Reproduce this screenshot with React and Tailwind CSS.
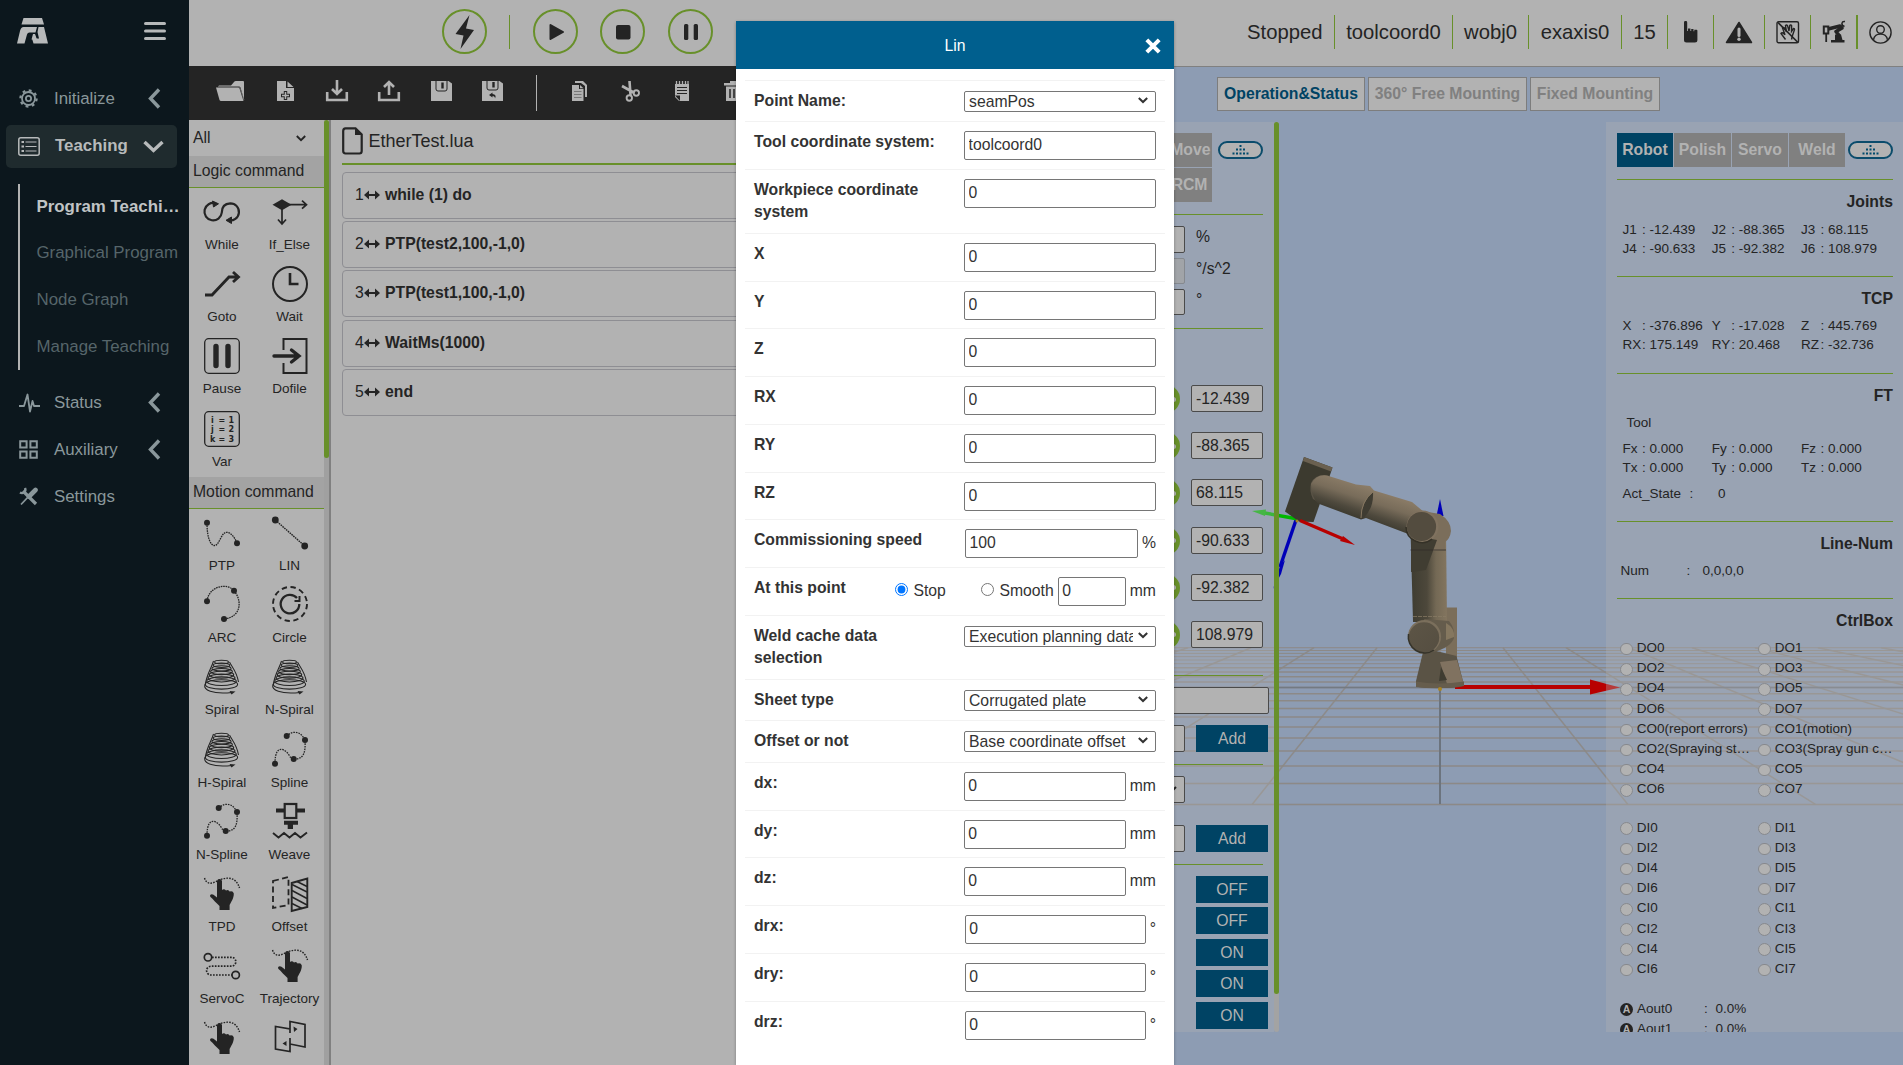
import React from "react";

const DARK = "#242424";

/* ---------- command palette icons (36 x 36) ---------- */

function Glyph({ children }) {
  return (
    <svg width="36" height="36" viewBox="0 0 36 36" fill="none" stroke={DARK} strokeWidth="1.6" className="overflow-visible">
      {children}
    </svg>
  );
}

const Dot = ({ x, y, r = 3 }) => <circle cx={x} cy={y} r={r} fill={DARK} stroke="none" />;

const SpiralIcon = () => (
  <Glyph>
    <g strokeWidth="1.05">
      {[0, 1, 2, 3, 4, 5, 6, 7].map((i) => (
        <ellipse key={i} cx={17.5} cy={3 + i * 3.2} rx={7 + i * 1.3} ry={1.8 + i * 0.42} />
      ))}
      <path d="M1 25.500 C-1 31 8 35.500 28 33.500" />
      <path d="M1 26.500 C3 14 8 8 9.500 2 M34.500 23 C33 13 28 8 25.500 3" />
    </g>
    <path d="M25.500 32 L31.500 32.500 L27.500 35.500 Z" fill={DARK} stroke="none" />
  </Glyph>
);

const HandIcon = () => (
  <Glyph>
    <path d="M0.500 2 C3 10 10 7 14 4.500 C22 1 32 0 35.500 12" strokeDasharray="1.600 1.200" strokeWidth="1.400" />
    <path
      fill={DARK}
      stroke="none"
      d="M13 5 a2.600 2.600 0 0 1 5 0 V14 q2-2 4 .6 q2.400-1.500 3.600 1 q3.400-1 4.200 1.800 C30 22 27 26 25.600 29 V34 H15.500 V30 C12 27 9 23 6.500 21 C5 19 7.500 17.300 9.500 18.800 L13 21.500 Z"
    />
  </Glyph>
);

const SplineIcon = () => (
  <Glyph>
    <path d="M3 31.700 C3 10 14 18 17 23 S21 27 24 27 C33 26 33.500 18 33 8 C28-2 20-1 14.700 4" strokeDasharray="1.600 1" strokeWidth="1.300" />
    <Dot x={14.7} y={4} />
    <Dot x={33} y={8} />
    <Dot x={21.7} y={27} />
    <Dot x={3} y={31.7} />
  </Glyph>
);

const ICONS = {
  While: (
    <Glyph>
      <g strokeWidth="2.200">
        <path d="M11.500 9.300 A8.700 8.700 0 1 0 17.800 18.500 C17.800 13 20.500 9.600 26.300 9.300 A8.600 8.600 0 1 1 24.500 26.300" />
      </g>
      <path d="M8.500 7 L14.500 9.800 L9.500 13 Z M27.500 23 V29.500 L22 26.300 Z" fill={DARK} stroke={DARK} strokeWidth="1" />
    </Glyph>
  ),
  If_Else: (
    <Glyph>
      <path d="M0.500 10.700 L10 5.200 L19.500 10.700 L10 16.200 Z" fill={DARK} stroke="none" />
      <path d="M10 12 V30 M6 25.500 L10 30 L14 25.500 M16 10.700 H34.500 M30 6.700 L34.500 10.700 L30 14.700" strokeWidth="1.700" />
    </Glyph>
  ),
  Goto: (
    <Glyph>
      <path d="M1 29 H8 L25 11 H34.500 M29 6 L34.500 11 L29 16" strokeWidth="2.800" />
    </Glyph>
  ),
  Wait: (
    <Glyph>
      <circle cx="18" cy="18" r="17" strokeWidth="2" />
      <path d="M18 7 V18 H26.500" strokeWidth="2.600" />
    </Glyph>
  ),
  Pause: (
    <Glyph>
      <rect x="0.700" y="0.700" width="34.600" height="34.600" rx="4" strokeWidth="1.300" />
      <path d="M12 8.500 V27.500 M24 8.500 V27.500" strokeWidth="5.400" strokeLinecap="round" />
    </Glyph>
  ),
  Dofile: (
    <Glyph>
      <path d="M11.500 12 V1 H34.500 V35 H11.500 V25" strokeWidth="2" />
      <path d="M2 18 H27 M19.500 12 L27 18 L19.500 24" strokeWidth="3.400" strokeLinecap="round" />
    </Glyph>
  ),
  Var: (
    <Glyph>
      <rect x="0.700" y="0.700" width="34.600" height="34.600" rx="4" strokeWidth="1.300" />
      <g fill={DARK} stroke="none" fontFamily="DejaVu Sans, sans-serif" fontWeight="bold" fontSize="8">
        <text x="7" y="11.500">i</text>
        <text x="14.500" y="11.500">=</text>
        <text x="24.500" y="11.500">1</text>
        <text x="7" y="21">j</text>
        <text x="14.500" y="21">=</text>
        <text x="24.500" y="21">2</text>
        <text x="6" y="31">k</text>
        <text x="14.500" y="31">=</text>
        <text x="24.500" y="31">3</text>
      </g>
    </Glyph>
  ),
  PTP: (
    <Glyph>
      <path d="M3 8 C3 24 7 30.500 10.500 30.500 C15.500 30.500 17 17.300 22.700 17.300 C27 17.300 31 23 33 28" strokeDasharray="1.600 0.800" strokeWidth="1.300" />
      <Dot x={3} y={7.7} />
      <Dot x={33} y={28.3} />
    </Glyph>
  ),
  LIN: (
    <Glyph>
      <path d="M3.300 5 L32.700 31" strokeDasharray="1.600 0.800" strokeWidth="1.400" />
      <Dot x={3.3} y={5} r={3.4} />
      <Dot x={32.7} y={31} r={3.4} />
    </Glyph>
  ),
  ARC: (
    <Glyph>
      <path d="M3 14.300 C5-2 24-4 30 3.700 C38 13 38 30 20 32" strokeDasharray="1.600 0.800" strokeWidth="1.300" />
      <Dot x={3} y={14.3} />
      <Dot x={30} y={3.7} />
      <Dot x={20} y={32} />
    </Glyph>
  ),
  Circle: (
    <Glyph>
      <circle cx="18" cy="17" r="17" strokeDasharray="5.300 3.600" strokeWidth="1.900" />
      <path d="M25 11 A9.300 9.300 0 1 0 27.300 17" strokeWidth="2.300" />
      <path d="M27.500 9 V14 H22.500" strokeWidth="2" />
    </Glyph>
  ),
  Spiral: <SpiralIcon />,
  "N-Spiral": <SpiralIcon />,
  "H-Spiral": <SpiralIcon />,
  Spline: <SplineIcon />,
  "N-Spline": <SplineIcon />,
  Weave: (
    <Glyph>
      <rect x="12.700" y="0" width="11.600" height="14" strokeWidth="2.200" />
      <path d="M4 6.500 H12 M25 6.500 H33" strokeWidth="4.200" />
      <path d="M12 16.700 H26 V20.700 H21 V25 H15.700 V20.700 H12 Z" fill={DARK} stroke="none" />
      <path d="M1 29 L6.500 33.500 L12 29 L17.500 33.500 L23 29 L28.500 33.500 L35 28.500" strokeWidth="1.900" />
    </Glyph>
  ),
  TPD: <HandIcon />,
  Offset: (
    <Glyph>
      <path d="M1 5 L16.500 1 V29 L1 32 Z" strokeDasharray="6 3.400" strokeWidth="1.800" />
      <path d="M19.700 7 L35.300 2.500 V31 L19.700 35 Z" strokeWidth="1.900" />
      <path d="M20 8.500 L35 16 M20 14.500 L35 22.500 M20 21 L35 29 M20 27.500 L30 32.500 M25 5.500 L35 10.500" strokeWidth="1.500" />
    </Glyph>
  ),
  ServoC: (
    <Glyph>
      <circle cx="4" cy="9.300" r="3.700" strokeWidth="1.700" />
      <circle cx="31.700" cy="27" r="3.700" strokeWidth="1.700" />
      <path d="M8 9.300 H28 a4.500 4.500 0 0 1 0 8.900 H7 a4.400 4.400 0 0 0 0 8.800 H28" strokeDasharray="1.700 1.300" strokeWidth="1.700" />
    </Glyph>
  ),
  Trajectory: <HandIcon />,
  Last1: <HandIcon />,
  Last2: (
    <Glyph>
      <path d="M18 18 V31.500 L3.500 29 V6.500 L18 9 V13 M18 12 V1.500 L33 4.500 V27 L18 24" strokeWidth="1.700" />
      <path d="M21.500 6.500 L25.500 9 L22 12 Z M14.500 21 V26 L10.500 23.500 Z" fill={DARK} stroke="none" />
    </Glyph>
  ),
};

function CommandGrid({ names, className }) {
  return (
    <div className={"grid grid-cols-[66px_69px] " + className}>
      {names.map((n) => (
        <div key={n} className="flex h-[72.2px] flex-col items-center">
          {ICONS[n]}
          <span className="mt-[4px] whitespace-nowrap text-[13.5px] leading-[22px]">{n.startsWith("Last") ? "" : n}</span>
        </div>
      ))}
    </div>
  );
}

function GroupTitle({ children }) {
  return <div className="h-[32px] shrink-0 border-b border-[#68902a] bg-[#a3a3a3] pl-[4px] text-[15.75px] leading-[30px]">{children}</div>;
}

/* ---------- sidebar ---------- */

const ChevL = () => (
  <svg width="13" height="21" viewBox="0 0 13 21" fill="none" stroke="currentColor" strokeWidth="3.400">
    <path d="M11 1.500 L2.500 10.500 L11 19.500" />
  </svg>
);

function NavItem({ icon, label, chevron, h }) {
  return (
    <div className={"flex items-center pl-[19px] text-[#8a979b] " + h}>
      <div className="flex w-[35px] items-center">{icon}</div>
      <span className="w-[93.500px] text-[16.875px]">{label}</span>
      {chevron && <ChevL />}
    </div>
  );
}

function Sidebar() {
  return (
    <aside className="flex w-[189px] shrink-0 flex-col bg-[#0c171d]">
      <div className="flex h-[66px] items-center justify-between pb-[4px] pl-[17px] pr-[23px] text-[#b7b9ba]">
        <svg width="31" height="26" viewBox="0 0 31 26" fill="currentColor">
          <path d="M6.500 0 H25 L27 6.500 H4.500 Z" />
          <path d="M6.500 9 H20 L18.500 14.500 H12.500 Q10.500 14.500 10 16.500 L7.500 25.500 H0 L3 13 Q4 9 6.500 9 Z" />
          <path d="M21.500 9 H27 L31 25.500 H16.500 L15 20.500 H22 L20.500 14 Z" />
          <path d="M16 16 L14.500 21.500 H20 L18 16 Z" />
        </svg>
        <svg width="22" height="18" viewBox="0 0 22 18" stroke="currentColor" strokeWidth="3" strokeLinecap="round">
          <path d="M1.500 1.500 H20.500 M1.500 9 H20.500 M1.500 16.500 H20.500" />
        </svg>
      </div>
      <NavItem
        h="h-[59px] pt-[6px]"
        label="Initialize"
        chevron
        icon={
          <svg width="19" height="19" viewBox="0 0 19 19" fill="none" stroke="currentColor">
            <circle cx="9.500" cy="9.500" r="6.500" strokeWidth="1.800" />
            <circle cx="9.500" cy="9.500" r="8.100" strokeWidth="2.200" strokeDasharray="2.800 3.560" />
            <circle cx="9.500" cy="9.500" r="2.600" strokeWidth="1.800" />
          </svg>
        }
      />
      <div className="ml-[6px] flex h-[43px] w-[171px] items-center rounded-[5px] bg-[#1f2b2e] pb-[2px] pl-[12px] text-[#b7babb]">
        <svg width="22" height="19" viewBox="0 0 22 19" fill="none" stroke="currentColor" className="mr-[15px] mt-[2px]">
          <rect x="0.800" y="0.800" width="20.400" height="17.400" rx="2" strokeWidth="1.500" />
          <path d="M3.500 5 H6 M3.500 9.500 H6 M3.500 14 H6" strokeWidth="2.200" />
          <path d="M7.500 5 H18.500 M7.500 9.500 H18.500 M7.500 14 H18.500" strokeWidth="1.100" />
        </svg>
        <span className="w-[88px] text-[16.875px] font-bold">Teaching</span>
        <svg width="21" height="13" viewBox="0 0 21 13" fill="none" stroke="currentColor" strokeWidth="3.400" className="mt-[2px]">
          <path d="M1.500 2 L10.500 10.500 L19.500 2" />
        </svg>
      </div>
      <div className="ml-[18px] mt-[16px] flex h-[186px] flex-col border-l-2 border-[#b2b2b2] pl-[16.500px] text-[16.875px] leading-[45px] text-[#56656a]">
        <div className="h-[46.300px] w-[145px] truncate font-bold leading-[45px] text-[#c0c4c5]">Program Teaching</div>
        <div className="h-[46.800px] whitespace-nowrap">Graphical Program</div>
        <div className="h-[46.800px]">Node Graph</div>
        <div className="h-[45px] whitespace-nowrap">Manage Teaching</div>
      </div>
      <div className="mt-[9px] flex flex-col">
        <NavItem
          h="h-[47px]"
          label="Status"
          chevron
          icon={
            <svg width="21" height="20" viewBox="0 0 21 20" fill="none" stroke="currentColor" strokeWidth="1.800" strokeLinejoin="round">
              <path d="M0 13 H5 L8.500 1.500 L11 18.500 L13.500 8 L15 13 H21" />
            </svg>
          }
        />
        <NavItem
          h="h-[47px]"
          label="Auxiliary"
          chevron
          icon={
            <svg width="19" height="19" viewBox="0 0 19 19" fill="none" stroke="currentColor" strokeWidth="2">
              <path d="M1.200 1.200 H7.600 V7.600 H1.200 Z M11.400 1.200 H17.800 V7.600 H11.400 Z M1.200 11.400 H7.600 V17.800 H1.200 Z M11.400 11.400 H17.800 V17.800 H11.400 Z" />
            </svg>
          }
        />
        <NavItem
          h="h-[47px]"
          label="Settings"
          icon={
            <svg width="19" height="19" viewBox="0 0 19 19" fill="none" stroke="currentColor">
              <path d="M4 4 L17 17" strokeWidth="3.200" />
              <path d="M1 5.500 a3.500 3.500 0 0 0 5 -4.500" strokeWidth="2.400" />
              <path d="M2 17.500 L10 9" strokeWidth="1.800" />
              <path d="M10 9.500 L16.500 3" strokeWidth="4.600" strokeLinecap="round" />
            </svg>
          }
        />
      </div>
    </aside>
  );
}

/* ---------- header and toolbar ---------- */

function RoundButton({ children, className }) {
  return (
    <div className={"flex size-[45px] shrink-0 items-center justify-center rounded-full border-2 border-[#68902a] " + className}>
      <svg width="36" height="36" viewBox="-18 -18 36 36" fill={DARK}>
        {children}
      </svg>
    </div>
  );
}

const statusCells = [
  ["Stopped", "w-[88px] pr-[13px] text-right"],
  ["toolcoord0", "w-[118px] text-center"],
  ["wobj0", "w-[76px] text-center"],
  ["exaxis0", "w-[93px] text-center"],
  ["15", "w-[46px] text-center"],
];

function Header() {
  return (
    <header className="flex h-[66px] shrink-0 items-start bg-[#b2b2b2] pt-[9px]">
      <RoundButton className="ml-[253px]">
        <path d="M4.500 -17 L-9.500 2 L-1.500 3.500 L-4.500 17 L9 -2 L1 -3.500 Z" />
      </RoundButton>
      <div className="ml-[22px] mt-[6px] h-[34px] w-px bg-[#68902a]" />
      <RoundButton className="ml-[23px]">
        <path d="M-5.500 -7 L7 0 L-5.500 7 Z" stroke={DARK} strokeWidth="2" strokeLinejoin="round" />
      </RoundButton>
      <RoundButton className="ml-[22px]">
        <rect x="-7" y="-7" width="14.500" height="14.500" rx="2" />
      </RoundButton>
      <RoundButton className="ml-[23px]">
        <rect x="-7" y="-8" width="4.300" height="16" rx="1.500" />
        <rect x="2.700" y="-8" width="4.300" height="16" rx="1.500" />
      </RoundButton>
      <div className="ml-auto mt-[6px] flex h-[34px] text-[20.250px] leading-[34px]">
        {statusCells.map(([t, w]) => (
          <div key={t} className={"border-r border-[#68902a] " + w}>{t}</div>
        ))}
        <div className="flex w-[46px] items-center justify-center border-r border-[#68902a]">
          <svg width="16" height="22" viewBox="0 0 16 22" fill={DARK}>
            <path d="M1 1.500 a1.600 1.600 0 0 1 3.200 0 V10 h.8 V7.500 h2.400 V10 h.8 V8 h2.300 V10.200 h.8 V8.800 h2.300 q.8 0 .8 1 V19 q0 2.500-2.500 2.500 H3.500 Q1 21.500 1 19 Z" />
          </svg>
        </div>
        <div className="flex w-[51px] items-center justify-center border-r border-[#68902a]">
          <svg width="28" height="23" viewBox="0 0 28 23">
            <path d="M14 1.500 L26.500 21.500 H1.500 Z" fill={DARK} stroke={DARK} strokeWidth="1.500" strokeLinejoin="round" />
            <path d="M14 8 V14.500" stroke="#b2b2b2" strokeWidth="3" strokeLinecap="round" />
            <circle cx="14" cy="18.300" r="1.700" fill="#b2b2b2" />
          </svg>
        </div>
        <div className="flex w-[46px] items-center justify-center border-r border-[#68902a]">
          <svg width="24" height="23" viewBox="0 0 24 23" fill="none" stroke={DARK} strokeWidth="1.400">
            <rect x="1" y="0.800" width="21.500" height="21" rx="1.500" />
            <path d="M9.500 18.500 L5 12.500 q1-1.500 2.500 0 L9 13.800 L6.500 7 q1-1 2 0 L10.500 11 L9.500 4.500 q1-1 2 0 L13 10 L13.800 4.300 q1-.8 1.800 .4 L15.500 10.500 L17.500 7.500 q1.200 0 1 1.200 L16.500 14.500 L15.500 18.500" />
            <path d="M2 1.500 L22 21.500" strokeWidth="1.700" />
          </svg>
        </div>
        <div className="flex w-[47px] items-center justify-center border-r-2 border-[#68902a]">
          <svg width="24" height="24" viewBox="0 0 24 24" fill="none" stroke={DARK}>
            <path d="M6 9 L18 6 L20 8 L14 11.500 L17.500 16" strokeWidth="3.600" strokeLinejoin="round" />
            <path d="M9 22.500 H22.500 V20 H20.500 L19 14.500 H13 V20 H9 Z" fill={DARK} stroke="none" />
            <rect x="1.800" y="6.500" width="4.500" height="7" strokeWidth="2" />
            <path d="M4.200 13 V22" strokeWidth="1.800" />
            <path d="M23 1.500 C19.500 1 18.500 5 22.500 6.500" strokeWidth="1.500" />
          </svg>
        </div>
        <div className="flex w-[45px] items-center justify-center">
          <svg width="23" height="23" viewBox="0 0 23 23" fill="none" stroke={DARK} strokeWidth="1.400">
            <circle cx="11.500" cy="11.500" r="10.600" />
            <circle cx="11.500" cy="8.500" r="3.800" />
            <path d="M4.500 18.800 C5.500 11 17.500 11 18.500 18.800" />
          </svg>
        </div>
      </div>
    </header>
  );
}

const LIGHT = "#b2b2b2";

function Tool({ className, w, children }) {
  return (
    <svg width={w} height="22" viewBox={"0 0 " + w + " 22"} fill={LIGHT} className={"shrink-0 overflow-visible " + className}>
      {children}
    </svg>
  );
}

function Toolbar() {
  return (
    <div className="flex h-[54px] shrink-0 items-center overflow-hidden bg-[#242424] pb-[4px]">
      <Tool w={29} className="ml-[27px]">
        <path d="M3 5.500 H15 L18 2 Q18.500 1 20 1 H27 Q28 1 28 2 V20 L24.500 7.500 Q24 6.500 23 6.500 H2 Z" />
        <path d="M0 7.500 H22 Q23 7.500 23.500 8.500 L27.500 21 H5 Q4 21 3.500 20 Z" />
        <path d="M2 7 H22.500 Q23.700 7 24.200 8.500 L28 20" fill="none" stroke="#777" strokeWidth="0.700" />
      </Tool>
      <Tool w={17} className="ml-[32px]">
        <path d="M0 1 H9 V8 H17 V21 H0 Z M10.500 1.500 L16.500 7 H10.500 Z" />
        <path d="M8.500 11 V20 M4 15.500 H13" stroke={DARK} strokeWidth="3.400" />
        <path d="M8.500 12 V19 M5 15.500 H12" stroke={LIGHT} strokeWidth="1.500" />
      </Tool>
      <Tool w={22} className="ml-[32px]">
        <path d="M1.200 12 V20 H20.800 V12 M11 0 V13 M6 9 L11 14 L16 9" fill="none" stroke={LIGHT} strokeWidth="2.600" />
      </Tool>
      <Tool w={22} className="ml-[30px]">
        <path d="M1.200 12 V20 H20.800 V12 M11 15 V2 M6 7 L11 2 L16 7" fill="none" stroke={LIGHT} strokeWidth="2.600" />
      </Tool>
      <Tool w={21} className="ml-[31px]">
        <path d="M0 1 H17.500 L21 3.500 V21 H0 Z" />
        <path d="M5 1 V9 Q5 11 7 11 H14 Q16 11 16 9 V1" fill="none" stroke={DARK} strokeWidth="1" />
        <path d="M11.500 2.500 V8.500" stroke={DARK} strokeWidth="2.400" />
      </Tool>
      <Tool w={21} className="ml-[30px]">
        <path d="M0 1 H17.500 L21 3.500 V21 H0 Z" />
        <path d="M5 1 V8 Q5 10 7 10 H14 Q16 10 16 8 V1" fill="none" stroke={DARK} strokeWidth="1" />
        <path d="M11.500 2 V7.500" stroke={DARK} strokeWidth="2.400" />
        <path d="M7 15 L10.500 12.500 V14 Q15 14.500 13 18.500 Q13 16 10.500 16 V17.500 Z" fill={DARK} />
      </Tool>
      <div className="ml-[33px] mt-[4px] h-[36px] w-px bg-[#b2b2b2]" />
      <Tool w={15} className="ml-[35px]">
        <path d="M3 1 H11 L15 5 V17 H13 V6 L9 3 H3 Z" />
        <path d="M0 5 H7 V9 H11.500 V21 H0 Z" />
        <path d="M8 5 L11.500 8.200 H8 Z" />
        <path d="M2 11.500 H9.500 M2 14.500 H9.500 M2 17.500 H9.500" stroke="#777" strokeWidth="1" />
      </Tool>
      <Tool w={19} className="ml-[34px]">
        <g fill="none" stroke={LIGHT}>
          <path d="M1 6 L13.500 13 M8.500 1 L9.500 15" strokeWidth="2.600" />
          <circle cx="15.300" cy="13" r="2.700" strokeWidth="1.900" />
          <circle cx="8.300" cy="18" r="2.700" strokeWidth="1.900" />
        </g>
      </Tool>
      <Tool w={16} className="ml-[34px]">
        <path d="M1 4 H15 V21 H5 L1 17 Z" />
        <path d="M2.500 1 V4 M5.500 1 V4 M8.500 1 V4 M11.500 1 V4 M14 1 V4" stroke={LIGHT} strokeWidth="1.300" />
        <path d="M3 7.500 H13 M3 10.500 H13 M3 13.500 H13" stroke={DARK} strokeWidth="1.200" />
        <path d="M1 15.500 H6 V21 Z" fill={DARK} />
      </Tool>
      <Tool w={20} className="ml-[34px]">
        <path d="M0 3 H20 V5.500 H0 Z M6 3 V1 H14 V3" />
        <path d="M2 6.500 H18 V21 H2 Z" />
        <path d="M6 9 V18 M10 9 V18 M14 9 V18" stroke={DARK} strokeWidth="1.500" />
      </Tool>
    </div>
  );
}

const codeLines = [
  ["while (1) do", "mb-[2px]"],
  ["PTP(test2,100,-1,0)", "mb-[2px]"],
  ["PTP(test1,100,-1,0)", "mb-[3px]"],
  ["WaitMs(1000)", "mb-[2px]"],
  ["end", ""],
];

function Program() {
  return (
    <div className="flex min-w-0 flex-1 flex-col bg-[#b2b2b2] pl-[11px]">
      <div className="flex h-[45px] items-center border-b-2 border-[#68902a] text-[18px]">
        <svg width="21" height="28" viewBox="0 0 21 28" className="mb-[1px] mr-[5.500px]">
          <path d="M3.500 1.300 H13.500 L19.700 7.500 V24 Q19.700 26.500 17.500 26.500 H3.500 Q1.200 26.500 1.200 24 V4 Q1.200 1.300 3.500 1.300 Z" fill="none" stroke={DARK} strokeWidth="2.200" />
          <path d="M13 1.500 V8 H19.500 Z" fill={DARK} />
        </svg>
        <span className="mb-[1px]">EtherTest.lua</span>
      </div>
      <div className="mt-[7px] flex flex-col">
        {codeLines.map(([t, m], i) => (
          <div key={t} className={"flex h-[47px] items-center rounded-[4px] border border-[#8e8e93] pb-[1px] pl-[12px] text-[15.750px] " + m}>
            <span className="w-[9px]">{i + 1}</span>
            <svg width="16" height="10" viewBox="0 0 16 10" fill={DARK} className="mb-[1px] mr-[5px]">
              <path d="M0 5 L5 0.500 V4 H11 V0.500 L16 5 L11 9.500 V6 H5 V9.500 Z" />
            </svg>
            <span className="font-bold">{t}</span>
          </div>
        ))}
      </div>
    </div>
  );
}

/* ---------- 3D scene ---------- */

const HORIZON = 566.7;
const rows = Array.from({ length: 21 }, (_, i) => HORIZON + 1 / ((0.0014025 + i * 0.00013563) * 3));
const cols = Array.from({ length: 21 }, (_, i) => i - 10);

/* Drawn in window coordinates, starting at x=1100, y=67. */
function Scene() {
  return (
    <svg className="absolute left-0 top-0" width="803" height="998" viewBox="1100 67 803 998">
      <defs>
        <linearGradient id="col" x1="0" x2="1">
          <stop offset="0" stopColor="#3e3c31" />
          <stop offset="0.45" stopColor="#4d483b" />
          <stop offset="0.7" stopColor="#746955" />
          <stop offset="1" stopColor="#83755f" />
        </linearGradient>
        <linearGradient id="arm" gradientUnits="userSpaceOnUse" x1="1368" y1="486" x2="1357" y2="519">
          <stop offset="0" stopColor="#8c7d68" />
          <stop offset="0.4" stopColor="#786c5a" />
          <stop offset="0.75" stopColor="#4e493d" />
          <stop offset="1" stopColor="#3b392f" />
        </linearGradient>
        <linearGradient id="ring" x1="0" y1="0" x2="1" y2="1">
          <stop offset="0" stopColor="#5d5546" />
          <stop offset="1" stopColor="#554e41" />
        </linearGradient>
      </defs>
      <g stroke="#8c8885" fill="none">
        {rows.map((y, i) => (
          <path key={i} d={`M1100 ${y.toFixed(1)} H1903`} strokeWidth={i > 14 ? 1 : 1.5} opacity={0.95} />
        ))}
        {cols.map((c) => (
          <path key={c} d={`M${1440 + c * 63} 647.7 L${1440 + c * 187.7} 804.300`} strokeWidth="1.500" opacity={0.9} />
        ))}
      </g>
      <path d="M1100 687.500 H1903" stroke="#737a82" strokeWidth="1.400" />
      <path d="M1440 690 V804" stroke="#6c747e" strokeWidth="2" />
      {/* world axes */}
      <path d="M1455 687 H1592" stroke="#b80000" strokeWidth="4" />
      <path d="M1590 679.500 L1590 694.500 L1620 687.500 Z" fill="#b80000" />
      <path d="M1440 499 L1436.500 516 H1443.500 Z" fill="#0000b8" />
      {/* tool axes */}
      <path d="M1296 520 L1280 567" stroke="#0000b8" strokeWidth="3.400" />
      <path d="M1285 560 L1280 566 L1273 589 L1281 574 Z" fill="#0000b8" />
      <path d="M1262 512.500 L1298 519" stroke="#00b800" strokeWidth="3.400" />
      <path d="M1252 511 L1266 509.500 L1265 516 Z" fill="#10b810" />
      {/* base */}
      <path d="M1446 607.500 H1457 V662 H1446 Z" fill="#7b6e5a" />
      <path d="M1424 648 L1456.500 656 L1464 685 Q1463 688 1440 688 Q1418 688 1416 686 V681 Z" fill="#5a5345" />
      <path d="M1440 662 L1457 660 L1464 685 L1448 687 Z" fill="#807260" />
      <path d="M1441 667 L1447 680 L1439 681 Z" fill="#3f3c31" />
      <path d="M1416 681.500 Q1438 685.500 1464 681.500 V686 Q1440 690 1416 687 Z" fill="#665d4d" />
      {/* upper column */}
      <path d="M1410.500 530 L1446 530 L1447 622 L1413 622 Z" fill="url(#col)" />
      <path d="M1413 616.500 L1446 616.500" stroke="#8a7c66" strokeWidth="0.700" strokeDasharray="4 1" />
      {/* shoulder */}
      <path d="M1424 619 L1449 621 Q1455 628 1454 638 Q1451 647 1434 652 Z" fill="#655c4c" />
      <path d="M1446 623 Q1455 628 1454 637 L1446 640 Z" fill="#85775f" />
      <circle cx="1424.500" cy="636.500" r="16.600" fill="#7b6f5c" />
      <circle cx="1424" cy="637.500" r="15.200" fill="url(#ring)" />
      <path d="M1408.500 634 A16.300 16.300 0 0 0 1434 650" fill="none" stroke="#35332a" strokeWidth="1.500" />
      {/* wrist and tool flange */}
      <path d="M1304 457 L1332.500 467.500 L1330 475 L1313.500 522 L1299 521.500 L1285 511.500 Z" fill="#3c3a2f" />
      <path d="M1304 457 L1332.500 467.500 L1331 471.500 L1303 461 Z" fill="#6a6050" />
      <path d="M1311 483 Q1315 475 1324 475 L1330 476 L1322 504 L1313 499 Q1309 491 1311 483 Z" fill="#5a5346" />
      {/* forearm */}
      <path d="M1311 484 Q1316 474 1327 475.500 L1356 484.500 L1370 486 L1374 490.500 L1412 502 L1424 512 L1416 536 L1407 533.500 L1366 518 L1361 519.500 L1318 503.500 Q1311 497 1311 484 Z" fill="url(#arm)" />
      <path d="M1373 492 Q1374 508 1363 518.500 L1361 519 Q1362 501 1373 492 Z" fill="#3f3c32" />
      <path d="M1361 518 Q1361 501 1373 492" fill="none" stroke="#857660" strokeWidth="1" />
      {/* elbow */}
      <path d="M1422 511 L1440 514 Q1451 521 1451 531 Q1450 539 1445 542 L1445 551 H1411 V540 Z" fill="#7b6e5b" />
      <path d="M1411 535 L1437 540 L1426 570 L1411 572 Z" fill="#403d32" />
      <path d="M1410.500 550 H1446" stroke="#332f28" strokeWidth="0.800" />
      <circle cx="1422.500" cy="526.500" r="16" fill="#80725f" />
      <circle cx="1421.500" cy="526.500" r="14.600" fill="#534c3f" />
      <path d="M1406 527 A16 16 0 0 0 1432 539" fill="none" stroke="#343127" strokeWidth="1.600" />
      <path d="M1300 520.500 L1342 538.500" stroke="#b80000" strokeWidth="3.400" />
      <path d="M1343 536 L1340 541 L1355 545 Z" fill="#b80000" />
      <circle cx="1440" cy="689" r="2" fill="#a88322" />
      <circle cx="1297" cy="521" r="1.500" fill="#a88322" />
    </svg>
  );
}

function Pill({ className }) {
  return (
    <div className={"flex h-[18px] w-[45px] items-center justify-center rounded-full border-2 border-[#0b4c6b] bg-[#b2b2b2] " + className}>
      <svg width="17" height="10" viewBox="0 0 17 10" fill="#004a6c">
        <path d="M7.500 0h2v2h-2z M4 3.500h2v2h-2z M7.500 3.500h2v2h-2z M11 3.500h2v2h-2z M0.500 7.500h2v2h-2z M4 7.500h2v2h-2z M7.500 7.500h2v2h-2z M11 7.500h2v2h-2z M14.500 7.500h2v2h-2z" />
      </svg>
    </div>
  );
}

const Rule = ({ className }) => <div className={"h-px shrink-0 bg-[#68902a] " + className} />;

const Box = ({ className, children }) => (
  <div className={"shrink-0 rounded-[2px] border border-[#4a4a4a] bg-[#b2b2b2] text-[15.750px] leading-[25px] " + className}>{children}</div>
);

const Btn = ({ children, className }) => (
  <div className={"ml-[96px] h-[27px] w-[72px] shrink-0 bg-[#004364] text-center text-[15.750px] leading-[28px] text-[#b2b2b2] " + className}>{children}</div>
);

function OpsPanel() {
  return (
    <div className="flex h-[910px] w-[179px]">
      <div className="flex w-[174px] flex-col overflow-hidden bg-[#b2b2b2]/[0.33]">
        <div className="mt-[11px] flex">
          <div className="h-[34px] w-[112px] bg-[#808080] pr-[1.500px] text-right text-[15.750px] font-bold leading-[34px] text-[#b2b2b2]">Move</div>
          <Pill className="ml-[6px] mt-[8px]" />
        </div>
        <div className="mt-px h-[34px] w-[112px] shrink-0 bg-[#808080] pr-[4.500px] text-right text-[15.750px] font-bold leading-[34px] text-[#b2b2b2]">RCM</div>
        <Rule className="mr-[11px] mt-[12px]" />
        <div className="mt-[11px] flex h-[27px] text-[15.750px] leading-[22px]">
          <Box className="h-[27px] w-[85px]" />
          <span className="ml-[11px]">%</span>
        </div>
        <div className="mt-[5px] flex h-[26px] text-[15.750px] leading-[22px]">
          <Box className="h-[26px] w-[85px] border-[#85898f]! bg-[#a1a4a8]!" />
          <span className="ml-[11px]">°/s^2</span>
        </div>
        <div className="mt-[5px] flex h-[26px] text-[15.750px] leading-[22px]">
          <Box className="h-[26px] w-[85px]" />
          <span className="ml-[11px]">°</span>
        </div>
        <Rule className="mr-[11px] mt-[13px]" />
        <div className="mt-[56px] flex flex-col">
          {["-12.439", "-88.365", "68.115", "-90.633", "-92.382", "108.979"].map((v) => (
            <div key={v} className="flex h-[47.200px] items-start">
              <div className="ml-[52px] flex size-[28px] items-center justify-center rounded-full bg-[#68902a]">
                <div className="h-[5px] w-[19px] rounded-full bg-[#b2b2b2]" />
              </div>
              <Box className="ml-[11px] h-[27px] w-[72px] pl-[4px]">{v}</Box>
            </div>
          ))}
        </div>
        <Rule className="mr-[11px] mt-[7px]" />
        <Box className="mt-[11px] h-[27px] w-[169px]" />
        <div className="mt-[11px] flex">
          <Box className="h-[27px] w-[85px]" />
          <Btn className="ml-[11px]!">Add</Btn>
        </div>
        <Rule className="mr-[11px] mt-[12px]" />
        <Box className="mt-[11px] flex h-[27px] w-[85px] items-center justify-end pr-[7px]">
          <svg width="10" height="7" viewBox="0 0 10 7" fill="none" stroke={DARK} strokeWidth="2">
            <path d="M1 1 L5 5 L9 1" />
          </svg>
        </Box>
        <div className="mt-[22px] flex">
          <Box className="h-[27px] w-[85px]" />
          <Btn className="ml-[11px]!">Add</Btn>
        </div>
        <Rule className="mr-[11px] mt-[12px]" />
        <Btn className="mt-[11px]">OFF</Btn>
        <Btn className="mt-[4px]">OFF</Btn>
        <Btn className="mt-[5px]">ON</Btn>
        <Btn className="mt-[4px]">ON</Btn>
        <Btn className="mt-[5px]">ON</Btn>
      </div>
      <div className="flex w-[5px] flex-col rounded-full bg-[#a3a3a3]">
        <div className="h-[872px] rounded-full bg-[#68902a]" />
      </div>
    </div>
  );
}

function Pair({ k, v }) {
  return (
    <div className="flex w-[89.300px]">
      <span className="w-[19.500px]">{k}</span>
      <span className="w-[7.500px]">:</span>
      <span>{v}</span>
    </div>
  );
}

function Readout({ data, className }) {
  return (
    <div className={"grid shrink-0 grid-cols-[89.3px_89.3px_89.3px] pl-[5.5px] leading-[19px] " + className}>
      {data.map(([k, v]) => (
        <Pair key={k} k={k} v={v} />
      ))}
    </div>
  );
}

const Title = ({ children }) => (
  <div className="mt-[11px] h-[22px] shrink-0 text-right text-[15.750px] font-bold leading-[22px]">{children}</div>
);

function Lamps({ names, className }) {
  return (
    <div className={"grid shrink-0 grid-cols-[138px_138px] pl-[3px] " + className}>
      {names.map((n) => (
        <div key={n} className="flex h-[20.200px] items-center">
          <span className="mt-[2px] size-[12.500px] shrink-0 rounded-full border border-[#87898d] bg-[#b2b2b2]" />
          <span className="ml-[4.250px] w-[118px] shrink-0 truncate leading-[20px]">{n}</span>
        </div>
      ))}
    </div>
  );
}

const outs = ["DO0", "DO1", "DO2", "DO3", "DO4", "DO5", "DO6", "DO7", "CO0(report errors)", "CO1(motion)", "CO2(Spraying start/stop)", "CO3(Spray gun cleaning)", "CO4", "CO5", "CO6", "CO7"];
const ins = ["DI0", "DI1", "DI2", "DI3", "DI4", "DI5", "DI6", "DI7", "CI0", "CI1", "CI2", "CI3", "CI4", "CI5", "CI6", "CI7"];

function StatusPanel() {
  return (
    <div className="flex h-[910px] w-[297px] flex-col overflow-hidden bg-[#b2b2b2]/[0.33] pl-[11px] pr-[10px] pt-[11px] text-[13.500px]">
      <div className="flex shrink-0 gap-px text-center text-[15.750px] font-bold leading-[34px] text-[#b2b2b2]">
        <div className="h-[34px] w-[56px] bg-[#004364]">Robot</div>
        <div className="h-[34px] w-[57px] bg-[#808080]">Polish</div>
        <div className="h-[34px] w-[56px] bg-[#808080]">Servo</div>
        <div className="h-[34px] w-[56px] bg-[#808080]">Weld</div>
        <Pill className="ml-[2px] mt-[8px]" />
      </div>
      <Rule className="mt-[12px]" />
      <Title>Joints</Title>
      <Readout
        className="mt-[7px]"
        data={[["J1", "-12.439"], ["J2", "-88.365"], ["J3", "68.115"], ["J4", "-90.633"], ["J5", "-92.382"], ["J6", "108.979"]]}
      />
      <Rule className="mt-[18px]" />
      <Title>TCP</Title>
      <Readout
        className="mt-[6px]"
        data={[["X", "-376.896"], ["Y", "-17.028"], ["Z", "445.769"], ["RX", "175.149"], ["RY", "20.468"], ["RZ", "-32.736"]]}
      />
      <Rule className="mt-[19px]" />
      <Title>FT</Title>
      <div className="mt-[6px] shrink-0 pl-[9.500px] leading-[19px]">Tool</div>
      <Readout
        className="mt-[7px]"
        data={[["Fx", "0.000"], ["Fy", "0.000"], ["Fz", "0.000"], ["Tx", "0.000"], ["Ty", "0.000"], ["Tz", "0.000"]]}
      />
      <div className="mt-[7px] flex shrink-0 pl-[5.500px] leading-[19px]">
        <span className="w-[67px]">Act_State</span>
        <span className="w-[28.500px]">:</span>
        <span>0</span>
      </div>
      <Rule className="mt-[18px]" />
      <Title>Line-Num</Title>
      <div className="mt-[6px] flex shrink-0 pl-[3.500px] leading-[19px]">
        <span className="w-[66px]">Num</span>
        <span className="w-[16px]">:</span>
        <span>0,0,0,0</span>
      </div>
      <Rule className="mt-[18px]" />
      <Title>CtrlBox</Title>
      <Lamps names={outs} className="mt-[6px]" />
      <Lamps names={ins} className="mt-[18px]" />
      <div className="mt-[20px] flex shrink-0 flex-col pl-[3px]">
        {["Aout0", "Aout1"].map((n) => (
          <div key={n} className="flex h-[20.200px] items-center leading-[20px]">
            <span className="flex size-[13px] items-center justify-center rounded-full bg-[#242424] text-[10.500px] font-bold leading-[13px] text-[#b2b2b2]">A</span>
            <span className="ml-[4px] w-[67px]">{n}</span>
            <span className="w-[11.500px]">:</span>
            <span>0.0%</span>
          </div>
        ))}
      </div>
    </div>
  );
}

function Workspace() {
  return (
    <section className="relative flex w-[803px] shrink-0 flex-col overflow-hidden border-t border-[#808080] bg-[#8d9cb3]">
      <Scene />
      <div className="relative ml-[117px] mt-[10px] flex h-[34px] gap-[3px] text-[15.750px] font-bold leading-[31px]">
        <div className="w-[148px] border border-[#7d7d7d] bg-[#b2b2b2] text-center text-[#004364]">Operation&amp;Status</div>
        <div className="w-[159px] border border-[#7d7d7d] bg-[#b2b2b2] text-center text-[#808080]">360° Free Mounting</div>
        <div className="w-[130px] border border-[#7d7d7d] bg-[#b2b2b2] text-center text-[#808080]">Fixed Mounting</div>
      </div>
      <div className="relative mt-[11px] flex justify-between">
        <OpsPanel />
        <StatusPanel />
      </div>
    </section>
  );
}

/* ---------- dialog ---------- */

const Field = ({ v, className }) => (
  <input defaultValue={v} className={"h-[29px] rounded-[2px] border border-[#767676] bg-white px-[3.500px] pb-[2px] text-[15.750px] outline-none " + className} />
);

const Pick = ({ v }) => (
  <div className="relative h-[21px] w-[192px]">
    <select className="h-[21px] w-[192px] appearance-none rounded-[2px] border border-[#767676] bg-white pl-[4px] pr-[22px] text-[15.750px] leading-[19px] outline-none">
      <option>{v}</option>
    </select>
    <svg width="10" height="7" viewBox="0 0 10 7" fill="none" stroke="#333" strokeWidth="2" className="absolute right-[8px] top-[7px]">
      <path d="M0.800 1 L5 5 L9.200 1" />
    </svg>
  </div>
);

const formRows = [
  ["Point Name:", "h-[41px]", "select", "seamPos"],
  ["Tool coordinate system:", "h-[48px]", "full", "toolcoord0"],
  ["Workpiece coordinate system", "h-[64px]", "full", "0"],
  ["X", "h-[48px]", "full", "0"],
  ["Y", "h-[47px]", "full", "0"],
  ["Z", "h-[48px]", "full", "0"],
  ["RX", "h-[48px]", "full", "0"],
  ["RY", "h-[48px]", "full", "0"],
  ["RZ", "h-[47px]", "full", "0"],
  ["Commissioning speed", "h-[48px]", "percent", "100"],
  ["At this point", "h-[48px]", "radio", "0"],
  ["Weld cache data selection", "h-[64px]", "select", "Execution planning data"],
  ["Sheet type", "h-[41px]", "select", "Corrugated plate"],
  ["Offset or not", "h-[42px]", "select", "Base coordinate offset"],
  ["dx:", "h-[48px]", "mm", "0"],
  ["dy:", "h-[47px]", "mm", "0"],
  ["dz:", "h-[48px]", "mm", "0"],
  ["drx:", "h-[48px]", "deg", "0"],
  ["dry:", "h-[48px]", "deg", "0"],
  ["drz:", "h-[48px]", "deg", "0"],
];

function Control({ kind, v }) {
  if (kind === "select") return <Pick v={v} />;
  if (kind === "full") return <Field v={v} className="w-[192px]" />;
  if (kind === "percent")
    return (
      <>
        <Field v={v} className="w-[173px]" />
        <span className="ml-[4px] leading-[28px]">%</span>
      </>
    );
  if (kind === "mm")
    return (
      <>
        <Field v={v} className="w-[162px]" />
        <span className="ml-[4px] leading-[28px]">mm</span>
      </>
    );
  if (kind === "deg")
    return (
      <>
        <Field v={v} className="w-[181px]" />
        <span className="ml-[4px] leading-[28px]">°</span>
      </>
    );
  return (
    <>
      <input type="radio" name="stop" defaultChecked className="mt-[6px] size-[13px]" />
      <span className="ml-[5.500px] w-[68px] leading-[28px]">Stop</span>
      <input type="radio" name="stop" className="mt-[6px] size-[13px]" />
      <span className="ml-[5px] mr-[4px] leading-[28px]">Smooth</span>
      <Field v={v} className="w-[68px]" />
      <span className="ml-[4px] leading-[28px]">mm</span>
    </>
  );
}

function Dialog() {
  return (
    <div className="absolute left-[736px] top-[21px] flex h-[1044px] w-[438px] flex-col bg-white text-[15.750px] text-[#333] shadow-[0_1px_3px_rgba(0,0,0,0.3)]">
      <div className="relative flex h-[48px] shrink-0 items-center justify-center bg-[#005f8e] text-white">
        <span className="pt-[1px]">Lin</span>
        <svg width="16" height="16" viewBox="0 0 16 16" className="absolute right-[13.500px] top-[16.500px]" stroke="#fff" strokeWidth="4">
          <path d="M1.800 1.800 L14.200 14.200 M14.200 1.800 L1.800 14.200" />
        </svg>
      </div>
      <div className="ml-[9px] mt-[11px] flex w-[420px] flex-col">
        {formRows.map(([label, h, kind, v]) => (
          <div key={label} className={"flex shrink-0 items-start justify-between border-t border-[#f2f2f2] pl-[9px] pr-[9px] pt-[9px] " + h}>
            <label className={"font-bold leading-[22px] " + (kind === "radio" ? "w-[110px]" : "w-[185px]")}>{label}</label>
            <div className="flex items-start">
              <Control kind={kind} v={v} />
            </div>
          </div>
        ))}
      </div>
    </div>
  );
}

export default function App() {
  return (
    <div className="relative flex h-[1065px] w-[1903px] overflow-hidden bg-[#b2b2b2] font-['Liberation_Sans',Arial,sans-serif] text-[#242424]">
      <Sidebar />
      <div className="flex min-w-0 flex-1 flex-col">
        <Header />
        <div className="flex min-h-0 flex-1">
          <div className="flex min-w-0 flex-1 flex-col">
            <Toolbar />
            <div className="flex min-h-0 flex-1">
              <div className="flex w-[135px] flex-col overflow-hidden">
                <div className="flex h-[36px] shrink-0 items-center justify-between pl-[4px] pr-[18px] text-[15.750px]">
                  <span>All</span>
                  <svg width="10" height="7" viewBox="0 0 10 7" fill="none" stroke={DARK} strokeWidth="1.900">
                    <path d="M0.800 1 L5 5.200 L9.200 1" />
                  </svg>
                </div>
                <GroupTitle>Logic command</GroupTitle>
                <CommandGrid className="h-[289px] shrink-0 pt-[6px]" names={["While", "If_Else", "Goto", "Wait", "Pause", "Dofile", "Var"]} />
                <GroupTitle>Motion command</GroupTitle>
                <CommandGrid
                  className="pt-[6px]"
                  names={["PTP", "LIN", "ARC", "Circle", "Spiral", "N-Spiral", "H-Spiral", "Spline", "N-Spline", "Weave", "TPD", "Offset", "ServoC", "Trajectory", "Last1", "Last2"]}
                />
              </div>
              <div className="flex w-[7px] flex-col border-r-2 border-[#808080] bg-[#a0a0a0]">
                <div className="h-[338px] w-[5px] rounded-full bg-[#68902a]" />
              </div>
              <Program />
            </div>
          </div>
          <Workspace />
        </div>
      </div>
      <Dialog />
    </div>
  );
}
